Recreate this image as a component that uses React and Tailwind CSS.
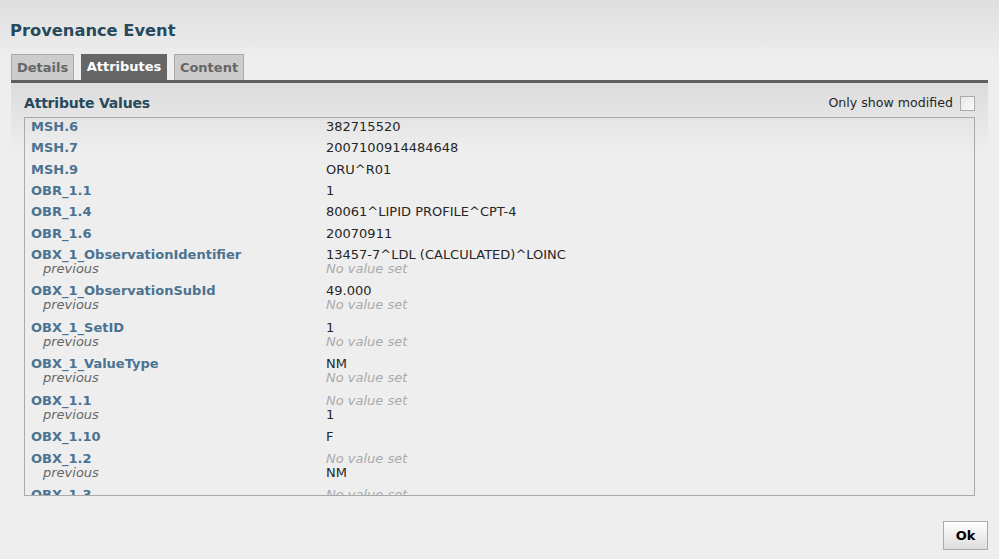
import React from "react";

const rows = [
  { name: "MSH.6", value: "382715520" },
  { name: "MSH.7", value: "2007100914484648" },
  { name: "MSH.9", value: "ORU^R01" },
  { name: "OBR_1.1", value: "1" },
  { name: "OBR_1.4", value: "80061^LIPID PROFILE^CPT-4" },
  { name: "OBR_1.6", value: "20070911" },
  { name: "OBX_1_ObservationIdentifier", value: "13457-7^LDL (CALCULATED)^LOINC", prev: null },
  { name: "OBX_1_ObservationSubId", value: "49.000", prev: null },
  { name: "OBX_1_SetID", value: "1", prev: null },
  { name: "OBX_1_ValueType", value: "NM", prev: null },
  { name: "OBX_1.1", value: null, prev: "1" },
  { name: "OBX_1.10", value: "F" },
  { name: "OBX_1.2", value: null, prev: "NM" },
  { name: "OBX_1.3", value: null, prev: "x" },
];

function Val({ v }) {
  if (v === null) return <span className="italic text-[#aaa]">No value set</span>;
  return <span className="text-[#262626]">{v}</span>;
}

export default function App() {
  return (
    <div
      className="w-[999px] h-[559px] overflow-hidden bg-gradient-to-b from-[#dedede] to-[#eeeeee] to-[60px] relative"
      style={{ fontFamily: '"DejaVu Sans", Verdana, sans-serif' }}
    >
      <div className="flex flex-col h-full">
        <div className="pl-[10px] pt-[20px] h-[54px]">
          <h1 className="text-[16.3px] font-bold text-[#264a5c] leading-[22px]">Provenance Event</h1>
        </div>
        <div className="mx-[11px] flex items-end gap-[7px] h-[26px] border-b-[3px] border-[#5f5f5f] box-content">
          <div className="h-[26px] w-[63px] flex items-center justify-center bg-[#cccccc] border border-b-0 border-[#aaa] text-[13px] font-bold text-[#666]">Details</div>
          <div className="h-[26px] w-[86px] flex items-center justify-center bg-[#666666] text-[13px] font-bold text-white">Attributes</div>
          <div className="h-[26px] w-[70px] flex items-center justify-center bg-[#cccccc] border border-b-0 border-[#aaa] text-[13px] font-bold text-[#666]">Content</div>
        </div>
        <div className="mx-[11px] bg-gradient-to-b from-[#dcdcdc] to-[#eeeeee] to-[70px] px-[13px] pb-0">
          <div className="flex items-center justify-between h-[34px] pt-[7px]">
            <div className="text-[14px] font-bold text-[#264a5c] tracking-[-0.2px]">Attribute Values</div>
            <div className="flex items-center gap-[7px] text-[12.6px] text-[#262626]">
              <span>Only show modified</span>
              <span className="w-[15px] h-[15px] border border-[#aaa] bg-gradient-to-br from-[#e8e8e8] to-[#fafafa]"></span>
            </div>
          </div>
          <div className="h-[379px] border border-[#aaa] overflow-hidden pl-[6px] pt-[1px]">
            {rows.map((r, i) => (
              <div key={i} className="flex text-[13px] leading-[15px] pb-[6.33px]">
                <div className="w-[295px] shrink-0">
                  <div className="font-bold text-[#4b7391]">{r.name}</div>
                  {"prev" in r && <div className="italic text-[#666] pl-[12px] leading-[15.17px] -mt-[1px] mb-[1px]">previous</div>}
                </div>
                <div>
                  <div><Val v={r.value} /></div>
                  {"prev" in r && <div className="leading-[15.17px] -mt-[1px] mb-[1px]"><Val v={r.prev} /></div>}
                </div>
              </div>
            ))}
          </div>
        </div>
        <div className="flex justify-end pr-[11px] pt-[25px]">
          <button className="w-[45px] h-[29px] border border-[#aaa] bg-gradient-to-b from-[#ffffff] to-[#dddddd] text-[13px] font-bold text-black">Ok</button>
        </div>
      </div>
    </div>
  );
}
